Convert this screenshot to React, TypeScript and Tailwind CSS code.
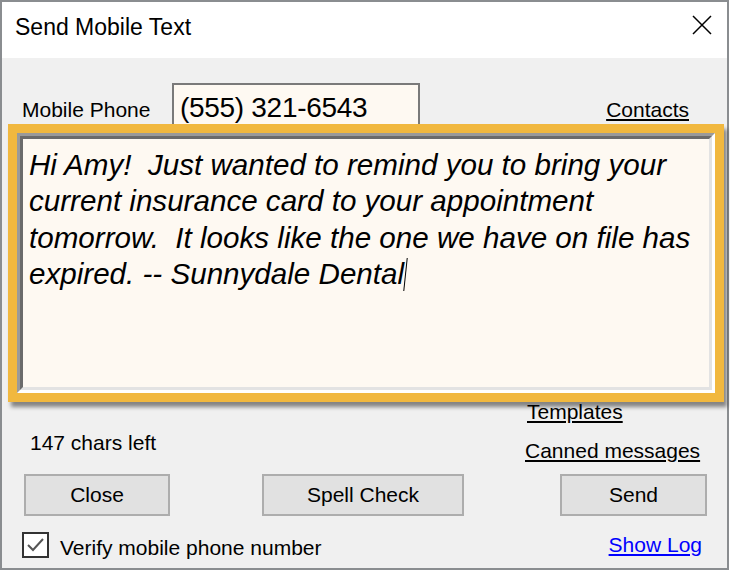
import React from 'react';

const font = { fontFamily: '"Liberation Sans", Arial, sans-serif' };

const message = [
  'Hi Amy!  Just wanted to remind you to bring your',
  'current insurance card to your appointment',
  'tomorrow.  It looks like the one we have on file has',
  'expired. -- Sunnydale Dental',
];

const CloseIcon = () => (
  <svg width="20" height="20" viewBox="0 0 20 20" className="block">
    <path d="M1 1 L19 19 M19 1 L1 19" stroke="#000" strokeWidth="1.5" fill="none" />
  </svg>
);

const WinButton: React.FC<{ label: string; className: string }> = ({ label, className }) => (
  <button
    className={`h-[42px] border-2 border-[#adadad] bg-[#e1e1e1] text-[21px] leading-[24px] text-black flex items-center justify-center ${className}`}
  >
    {label}
  </button>
);

export default function App() {
  return (
    <div style={font} className="w-[730px] h-[570px] bg-white">
      <div className="w-[729px] h-[570px] border-2 border-[#8a8d90] flex flex-col bg-[#f0f0f0]">
        {/* title bar */}
        <div className="h-[56px] bg-white flex items-start shrink-0">
          <span className="pl-[13px] pt-[11px] text-[23px] leading-[28px] text-black">Send Mobile Text</span>
          <div className="ml-auto mr-[15px] mt-[13px]">
            <CloseIcon />
          </div>
        </div>

        {/* phone row */}
        <div className="flex items-start pt-[25px] h-[69px] shrink-0">
          <span className="w-[170px] shrink-0 pl-[20px] mt-[15px] text-[21px] leading-[24px] text-black">Mobile Phone</span>
          <div className="w-[248px] h-[44px] border-2 border-[#7a7a7a] bg-[#fef9f2] pl-[6px] pt-[7px]">
            <span className="text-[28px] leading-[32px] text-black tracking-[-0.3px]">(555) 321-6543</span>
          </div>
          <a className="ml-auto mr-[38px] mt-[15px] text-[21px] leading-[24px] text-black underline decoration-2 underline-offset-[2px]">
            Contacts
          </a>
        </div>

        {/* highlighted message box */}
        <div className="relative z-10 -mt-[3px] ml-[6px] w-[716px] h-[278px] border-[9px] border-[#f1b83f] shadow-[3px_5px_4px_rgba(0,0,0,0.45)] shrink-0">
          <div className="h-full border-[3px] border-t-[#9a9a9a] border-l-[#9a9a9a] border-b-white border-r-white">
            <div className="h-full border-[3px] border-t-[#6b6b6b] border-l-[#6b6b6b] border-b-[#e3e3e3] border-r-[#e3e3e3] bg-[#fef9f2] pl-[6px] pt-[8px]">
              <div className="italic text-[29.6px] leading-[36.3px] text-black whitespace-pre">
                {message.map((line, i) => (
                  <div key={i}>
                    {line}
                    {i === message.length - 1 && (
                      <span className="inline-block w-px h-[33px] bg-black align-[-7px] ml-px -skew-x-6" />
                    )}
                  </div>
                ))}
              </div>
            </div>
          </div>
        </div>

        {/* counter and links */}
        <div className="flex -mt-[2px] shrink-0">
          <div className="w-[523px] pl-[28px] pt-[31px]">
            <span className="text-[21px] leading-[24px] text-black">147 chars left</span>
          </div>
          <div className="flex flex-col items-start">
            <a className="ml-[2px] text-[21px] leading-[24px] text-black underline decoration-2 underline-offset-[2px]">Templates</a>
            <a className="mt-[15px] text-[21px] leading-[24px] text-black underline decoration-2 underline-offset-[2px]">
              Canned messages
            </a>
          </div>
        </div>

        {/* buttons */}
        <div className="flex mt-[11px] shrink-0">
          <WinButton label="Close" className="ml-[22px] w-[146px]" />
          <WinButton label="Spell Check" className="ml-[92px] w-[202px]" />
          <WinButton label="Send" className="ml-[96px] w-[147px]" />
        </div>

        {/* verify row */}
        <div className="flex items-start mt-[16px] shrink-0">
          <div className="ml-[20px] w-[27px] h-[26px] border-2 border-[#333333] bg-white">
            <svg width="23" height="22" viewBox="0 0 23 22" className="block">
              <polyline points="4,11 9,16 19,5" stroke="#555" strokeWidth="2" fill="none" />
            </svg>
          </div>
          <span className="ml-[11px] mt-[4px] text-[21px] leading-[24px] text-black">Verify mobile phone number</span>
          <a className="ml-auto mr-[25px] mt-[1px] text-[21px] leading-[24px] text-[#0000ff] underline decoration-2 underline-offset-[2px]">
            Show Log
          </a>
        </div>
      </div>
    </div>
  );
}
